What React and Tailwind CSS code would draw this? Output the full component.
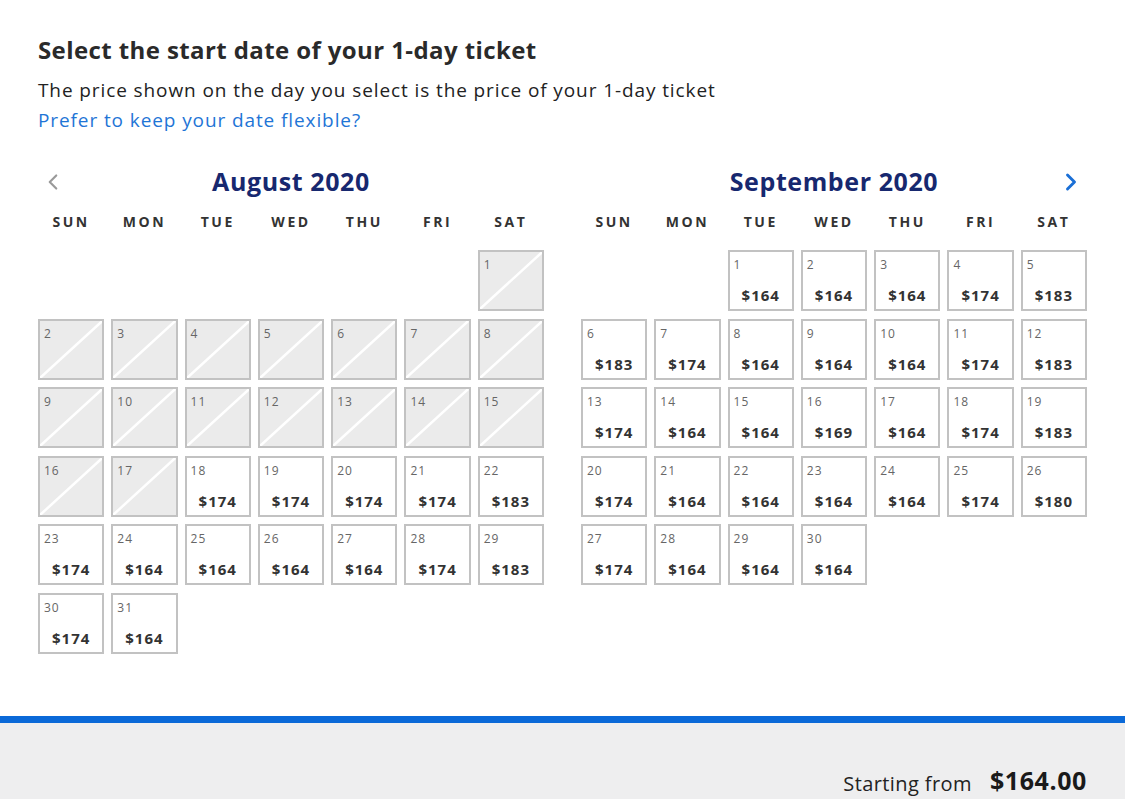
import { ChevronLeft, ChevronRight } from 'lucide-react';

const DAYS = ['SUN', 'MON', 'TUE', 'WED', 'THU', 'FRI', 'SAT'];

// null price = sold out / unavailable
const AUGUST = {
  offset: 6,
  prices: [
    null, null, null, null, null, null, null, null, null, null, null, null, null, null, null, null, null,
    174, 174, 174, 174, 183, 174, 164, 164, 164, 164, 174, 183, 174, 164,
  ],
};

const SEPTEMBER = {
  offset: 2,
  prices: [
    164, 164, 164, 174, 183, 183, 174, 164, 164, 164, 174, 183, 174, 164, 164, 169, 164, 174, 183,
    174, 164, 164, 164, 164, 174, 180, 174, 164, 164, 164,
  ],
};

function DayCell({ day, price }) {
  const disabled = price == null;
  return (
    <div
      className={`relative h-[61px] border-2 border-[#c2c2c2] ${disabled ? 'bg-[#ebebeb]' : 'bg-white'}`}
    >
      {disabled && (
        <svg className="absolute inset-0 h-full w-full" preserveAspectRatio="none" viewBox="0 0 100 100">
          <line x1="0" y1="100" x2="100" y2="0" stroke="#ffffff" strokeWidth="2.5" vectorEffect="non-scaling-stroke" />
        </svg>
      )}
      <span className="absolute left-[4px] top-[4px] text-[12px] tracking-[1px] text-[#666]">{day}</span>
      {!disabled && (
        <span className="absolute inset-x-0 top-[32px] text-center text-[15px] font-bold tracking-[1px] text-[#333]">
          ${price}
        </span>
      )}
    </div>
  );
}

function Month({ title, data, prev, next }) {
  return (
    <div className="w-[506px]">
      <div className="relative flex h-[40px] items-center justify-center">
        {prev && <ChevronLeft className="absolute left-[2px] h-[26px] w-[26px] text-[#9a9a9a]" strokeWidth={2} />}
        <h2 className="text-[25px] font-bold tracking-[0.6px] text-[#17286f]">{title}</h2>
        {next && <ChevronRight className="absolute right-[2px] h-[28px] w-[28px] text-[#1a6fd6]" strokeWidth={2.5} />}
      </div>
      <div className="mt-[9px] grid grid-cols-7 gap-x-[7px]">
        {DAYS.map((d) => (
          <div key={d} className="text-center text-[14px] font-bold tracking-[2.5px] text-[#333]">
            {d}
          </div>
        ))}
      </div>
      <div className="mt-[18px] grid grid-cols-7 gap-x-[7px] gap-y-[7.5px]">
        {Array.from({ length: data.offset }).map((_, i) => (
          <div key={`e${i}`} />
        ))}
        {data.prices.map((p, i) => (
          <DayCell key={i} day={i + 1} price={p} />
        ))}
      </div>
    </div>
  );
}

export default function App() {
  return (
    <div className="flex min-h-[799px] flex-col bg-white font-['Open_Sans',sans-serif]">
      <div className="px-[38px] pt-[33px]">
        <h1 className="text-[24px] font-bold leading-[34px] tracking-[0.4px] text-[#2a2a2a]">
          Select the start date of your 1-day ticket
        </h1>
        <p className="mt-[8px] text-[19px] leading-[30px] tracking-[0.9px] text-[#222]">
          The price shown on the day you select is the price of your 1-day ticket
        </p>
        <a className="block text-[19px] leading-[30px] tracking-[0.9px] text-[#1f75d6]">
          Prefer to keep your date flexible?
        </a>

        <div className="mt-[27px] flex gap-[37px]">
          <Month title="August 2020" data={AUGUST} prev />
          <Month title="September 2020" data={SEPTEMBER} next />
        </div>
      </div>

      <div className="mt-auto">
        <div className="h-[7px] bg-[#0a69d8]" />
        <div className="flex h-[76px] items-end justify-end gap-[18px] bg-[#eeeeef] px-[38px]">
          <span className="text-[20px] tracking-[0.4px] text-[#222]">Starting from</span>
          <span className="text-[25px] font-bold tracking-[0.6px] text-[#1a1a1a]">$164.00</span>
        </div>
      </div>
    </div>
  );
}
